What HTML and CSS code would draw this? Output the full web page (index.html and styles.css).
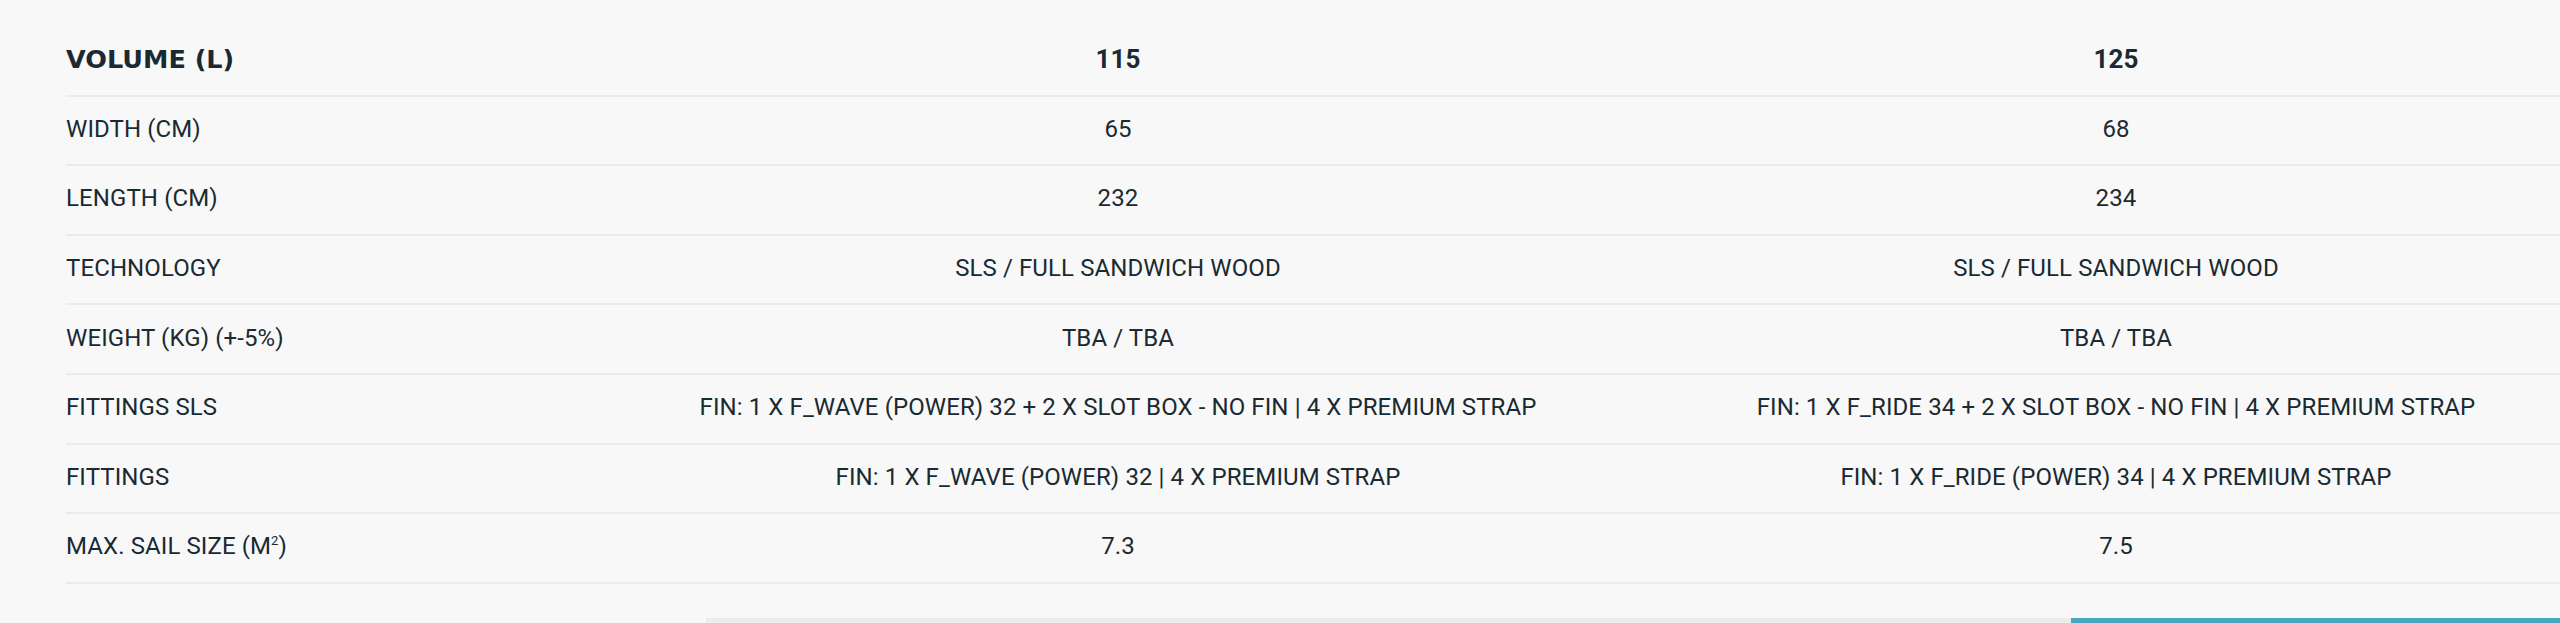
FILE: index.html
```html
<!DOCTYPE html>
<html><head><link rel="stylesheet" href="styles.css"></head>
<body>
<section class="specs">
  <div class="table">
    <div class="row head">
      <div class="label">VOLUME (L)</div>
      <div class="val">115</div>
      <div class="val">125</div>
    </div>
    <div class="row">
      <div class="label">WIDTH (CM)</div>
      <div class="val">65</div>
      <div class="val">68</div>
    </div>
    <div class="row">
      <div class="label">LENGTH (CM)</div>
      <div class="val">232</div>
      <div class="val">234</div>
    </div>
    <div class="row">
      <div class="label">TECHNOLOGY</div>
      <div class="val">SLS / FULL SANDWICH WOOD</div>
      <div class="val">SLS / FULL SANDWICH WOOD</div>
    </div>
    <div class="row">
      <div class="label">WEIGHT (KG) (+-5%)</div>
      <div class="val">TBA / TBA</div>
      <div class="val">TBA / TBA</div>
    </div>
    <div class="row">
      <div class="label">FITTINGS SLS</div>
      <div class="val">FIN: 1 X F_WAVE (POWER) 32 + 2 X SLOT BOX - NO FIN | 4 X PREMIUM STRAP</div>
      <div class="val">FIN: 1 X F_RIDE 34 + 2 X SLOT BOX - NO FIN | 4 X PREMIUM STRAP</div>
    </div>
    <div class="row">
      <div class="label">FITTINGS</div>
      <div class="val">FIN: 1 X F_WAVE (POWER) 32 | 4 X PREMIUM STRAP</div>
      <div class="val">FIN: 1 X F_RIDE (POWER) 34 | 4 X PREMIUM STRAP</div>
    </div>
    <div class="row">
      <div class="label">MAX. SAIL SIZE (M<sup>2</sup>)</div>
      <div class="val">7.3</div>
      <div class="val">7.5</div>
    </div>
  </div>
  <div class="scrollbar"><div class="thumb"></div></div>
</section>
</body></html>
```
FILE: styles.css
```css
html,body{margin:0;padding:0;}
body{background:#f8f8f8;color:#1a2a32;font-family:Roboto,"Liberation Sans",sans-serif;overflow:hidden;}
.specs{padding-top:27px;overflow:hidden;}
.table{margin-left:66px;width:2549px;}
.row{display:grid;grid-template-columns:553px 998px 998px;height:67.6px;border-bottom:2px solid #ebebeb;align-items:center;}
.label,.val{font-size:24px;letter-spacing:0.1px;line-height:28px;white-space:nowrap;padding-bottom:3px;}
.val{text-align:center;}
.label sup{font-size:13px;vertical-align:top;line-height:16px;position:relative;top:1px;}
.head .label{font-family:"DejaVu Sans",sans-serif;font-weight:700;font-size:25.5px;letter-spacing:0;}
.head .val{font-weight:700;font-size:26px;letter-spacing:0;}
.scrollbar{margin-top:34px;margin-left:706px;height:6px;background:#ececec;display:flex;justify-content:flex-end;}
.thumb{width:489px;background:#47a6c0;}
```
